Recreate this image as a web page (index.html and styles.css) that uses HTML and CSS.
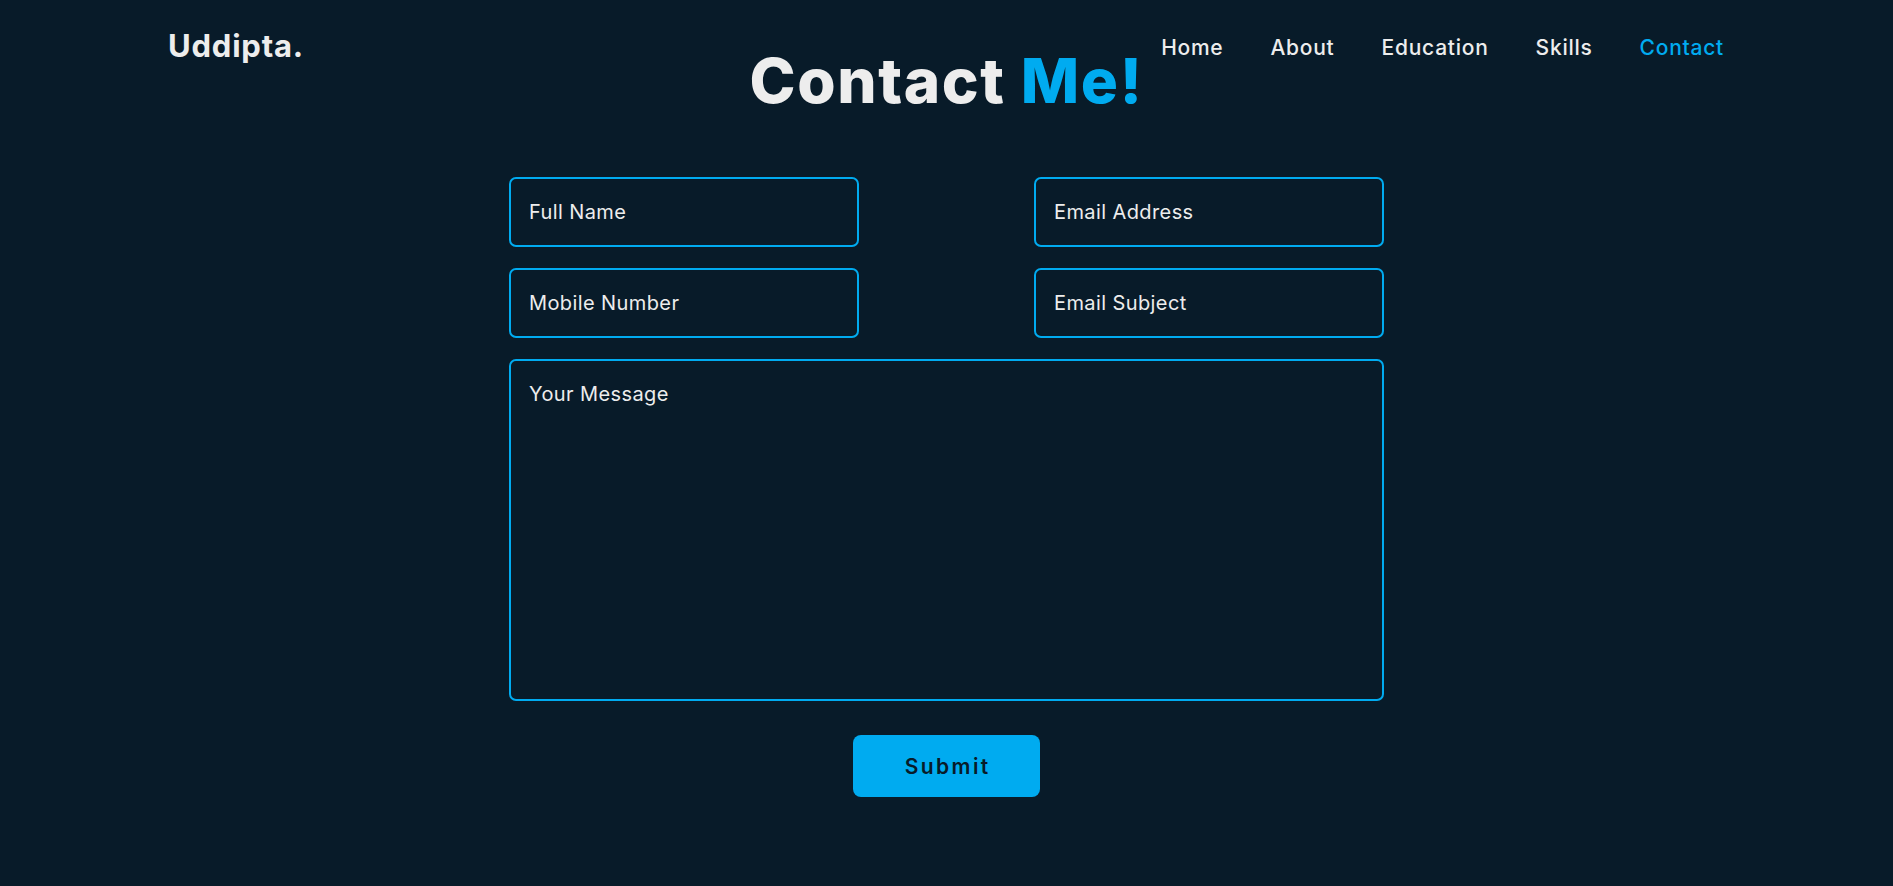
FILE: index.html
```html
<!DOCTYPE html>
<html lang="en">
<head>
<meta charset="utf-8">
<title>Contact</title>
<link rel="stylesheet" href="styles.css">
</head>
<body>
<header class="header">
  <a href="#" class="logo">Uddipta.</a>
  <nav class="navbar">
    <a href="#">Home</a>
    <a href="#">About</a>
    <a href="#">Education</a>
    <a href="#">Skills</a>
    <a href="#" class="active">Contact</a>
  </nav>
</header>
<main class="contact">
  <h2 class="heading">Contact <span>Me!</span></h2>
  <form class="form">
    <input class="field" type="text" placeholder="Full Name">
    <input class="field" type="email" placeholder="Email Address">
    <input class="field" type="text" placeholder="Mobile Number">
    <input class="field" type="text" placeholder="Email Subject">
    <textarea class="field message" placeholder="Your Message"></textarea>
    <div class="actions"><button type="button" class="btn">Submit</button></div>
  </form>
</main>
</body>
</html>
```

FILE: styles.css
```css
* { box-sizing: border-box; }
html, body { margin: 0; padding: 0; }
body {
  background: #081b29;
  color: #ededed;
  font-family: Inter, "Noto Sans", sans-serif;
  min-height: 886px;
}
a { text-decoration: none; color: #ededed; }

.header {
  position: absolute;
  top: 0; left: 0; right: 0;
  display: flex;
  justify-content: space-between;
  align-items: flex-start;
  padding: 28px 169px 0 168px;
}
.logo {
  font-size: 31px;
  font-weight: 700;
  line-height: 36px;
  letter-spacing: 0.8px;
}
.navbar {
  display: flex;
  gap: 47px;
  padding-top: 7px;
}
.navbar a {
  font-size: 21px;
  font-weight: 500;
  line-height: 26px;
  letter-spacing: 0.75px;
}
.navbar a.active { color: #00abf0; }

.contact {
  padding-top: 45px;
}
.heading {
  margin: 0;
  text-align: center;
  font-size: 62px;
  font-weight: 800;
  line-height: 72px;
  letter-spacing: 1.6px;
}
.heading span { color: #00abf0; }

.form {
  width: 875px;
  margin: 60px auto 0;
  display: grid;
  grid-template-columns: 350px 350px;
  justify-content: space-between;
  row-gap: 21px;
}
.field {
  width: 100%;
  height: 70px;
  padding: 0 18px;
  background: transparent;
  border: 2px solid #00abf0;
  border-radius: 7px;
  color: #ededed;
  font-family: Inter, "Noto Sans", sans-serif;
  font-size: 20px;
  letter-spacing: 0.4px;
  outline: none;
}
.field::placeholder { color: #ededed; opacity: 1; }
.message {
  grid-column: 1 / -1;
  height: 342px;
  padding: 20px 18px;
  resize: none;
  line-height: 26px;
}
.actions {
  grid-column: 1 / -1;
  display: flex;
  justify-content: center;
  padding-top: 13px;
}
.btn {
  width: 187px;
  height: 62px;
  border: none;
  border-radius: 8px;
  background: #00abf0;
  color: #081b29;
  font-family: Inter, "Noto Sans", sans-serif;
  font-size: 21px;
  font-weight: 600;
  letter-spacing: 2.4px;
  padding: 0 0 0 2.4px;
  cursor: pointer;
}
```
